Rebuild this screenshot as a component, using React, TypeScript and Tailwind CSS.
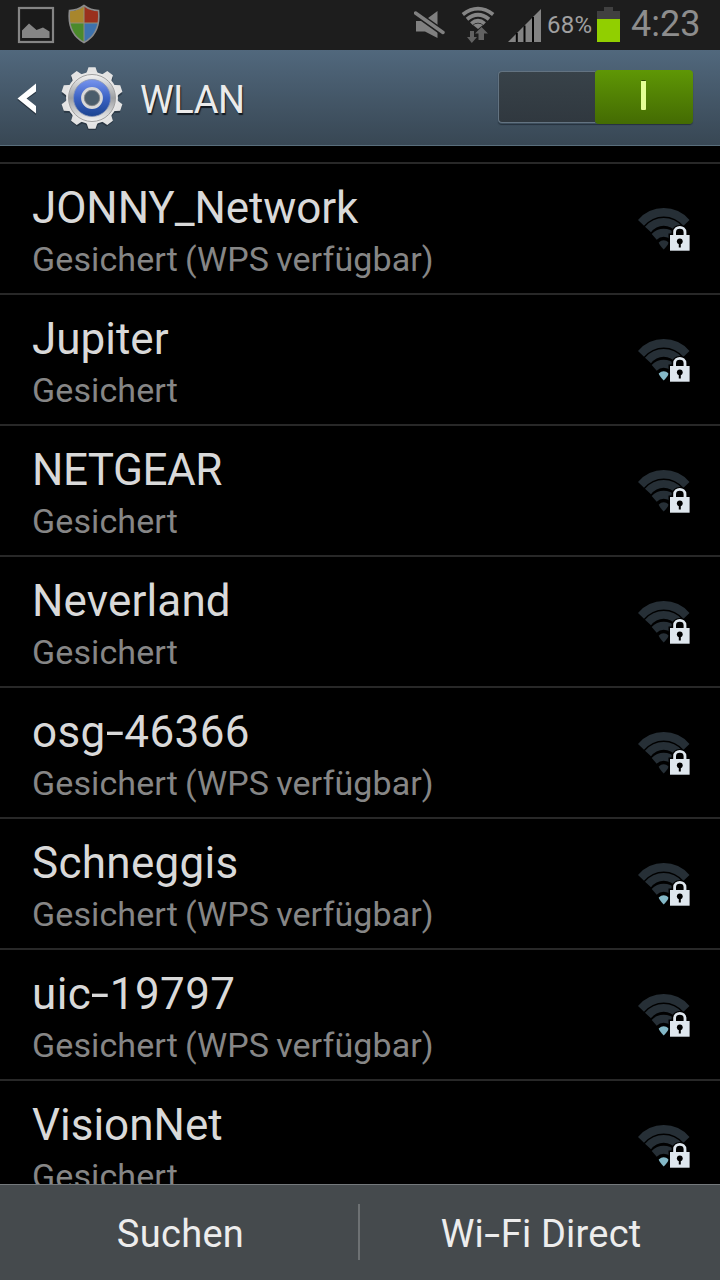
type Network = {
  name: string
  info: string
  signal: boolean
  spacing: string
}

const SECURED = "Gesichert"
const SECURED_WPS = "Gesichert (WPS verfügbar)"

const networks: Network[] = [
  { name: "JONNY_Network", info: SECURED_WPS, signal: false, spacing: "tracking-[-0.1px]" },
  { name: "Jupiter", info: SECURED, signal: true, spacing: "tracking-[0px]" },
  { name: "NETGEAR", info: SECURED, signal: false, spacing: "tracking-[-0.5px]" },
  { name: "Neverland", info: SECURED, signal: false, spacing: "tracking-[0.15px]" },
  { name: "osg-46366", info: SECURED_WPS, signal: false, spacing: "tracking-[0.4px]" },
  { name: "Schneggis", info: SECURED_WPS, signal: true, spacing: "tracking-[0.3px]" },
  { name: "uic-19797", info: SECURED_WPS, signal: true, spacing: "tracking-[0.4px]" },
  { name: "VisionNet", info: SECURED, signal: true, spacing: "tracking-[0px]" },
]

// widens the hyphen, which is short in Roboto
const WideHyphen = ({ text }: { text: string }) => {
  const [before, after] = text.split("-")
  if (after === undefined) return <>{text}</>
  return (
    <>
      {before}
      <span className="mx-[3px] inline-block scale-x-150">-</span>
      {after}
    </>
  )
}

const PictureIcon = () => (
  <svg width="38" height="38" viewBox="0 0 38 38">
    <rect x="2" y="2" width="34" height="34" fill="#1a1a1a" stroke="#858585" strokeWidth="2.200" />
    <path d="M5 32V24.500L12 17.500L19.500 24L26 21.500L32.500 25.500V32Z" fill="#858585" />
  </svg>
)

const ShieldIcon = () => (
  <svg width="34" height="40" viewBox="0 0 34 40">
    <defs>
      <clipPath id="shield">
        <path d="M17 2C13 5 8 7 2.500 7C1 20 5 32 17 38.500C29 32 33 20 31.500 7C26 7 21 5 17 2Z" />
      </clipPath>
    </defs>
    <g clipPath="url(#shield)">
      <rect width="17" height="19" fill="#a8862c" />
      <rect x="17" width="17" height="19" fill="#9a301d" />
      <rect y="19" width="17" height="21" fill="#4b8a2b" />
      <rect x="17" y="19" width="17" height="21" fill="#3d72ad" />
      <path d="M17 0V40M0 19H34" stroke="#929078" strokeWidth="1" />
    </g>
    <path d="M17 1.500C13 4.500 8 6.500 2.500 6.500C1 20 5 32 17 38.500C29 32 33 20 31.500 6.500C26 6.500 21 4.500 17 1.500Z" fill="none" stroke="#8b8b8b" strokeWidth="1.600" />
  </svg>
)

const MuteIcon = () => (
  <svg width="32" height="30" viewBox="0 0 32 30">
    <path d="M2 11H10L23.500 1V28L11 21.500H2Z" fill="#808080" />
    <path d="M0 2L31 24" stroke="#1d1d1d" strokeWidth="6.500" />
    <path d="M1.500 3L29 22.500" stroke="#808080" strokeWidth="3.400" strokeLinecap="round" />
  </svg>
)

const StatusWifiIcon = () => (
  <svg width="34" height="38" viewBox="0 0 34 38">
    <g fill="none" stroke="#858585" strokeWidth="3.800">
      <path d="M1.800 8.500Q17 -3.200 32.200 8.500" />
      <path d="M6 13.300Q17 4.300 28 13.300" />
      <path d="M10.300 17.600Q17 11.800 23.700 17.600" />
    </g>
    <path d="M12 19Q17 15.800 22 19L17 23Z" fill="#858585" />
    <path d="M9 25H13V31H16L10.800 37L6 31H9Z" fill="#626262" />
    <path d="M17.500 34V27.500H14L20.500 21L27 27.500H23V34Z" fill="#626262" />
  </svg>
)

const SignalIcon = () => (
  <svg width="34" height="34" viewBox="0 0 34 34">
    <path d="M0 33L33 0V33Z" fill="#838383" />
    <path d="M8.800 24V33M16.500 16.500V33M25 8V33" stroke="#050505" strokeWidth="2" />
  </svg>
)

const BatteryIcon = () => (
  <svg width="23" height="35" viewBox="0 0 23 35" shapeRendering="crispEdges">
    <path d="M7 0H16V4H23V12H0V4H7Z" fill="#404040" />
    <rect y="12" width="23" height="23" fill="#91cf00" />
  </svg>
)

const teeth = [0, 36, 72, 108, 144, 180, 216, 252, 288, 324]

const SettingsIcon = () => (
  <svg width="66" height="68" viewBox="-33 -33 66 68">
    <defs>
      <linearGradient id="metal" x1="0" y1="0" x2="0" y2="1">
        <stop offset="0" stopColor="#f4f4f4" />
        <stop offset="0.5" stopColor="#9c9fa2" />
        <stop offset="1" stopColor="#f2f2f2" />
      </linearGradient>
      <linearGradient id="blue" x1="0" y1="0" x2="0" y2="1">
        <stop offset="0" stopColor="#7794ee" />
        <stop offset="0.5" stopColor="#3b62c4" />
        <stop offset="1" stopColor="#1b4490" />
      </linearGradient>
    </defs>
    <g fill="#17202a" opacity="0.5" transform="translate(0 1.500)">
      <circle r="26" />
      {teeth.map((angle) => (
        <path key={angle} d="M-6.500 -24L-4 -30.500H4L6.500 -24Z" transform={`rotate(${angle})`} />
      ))}
    </g>
    {teeth.map((angle) => (
      <path key={angle} d="M-6.500 -23L-5 -26.500L-3.500 -30.800H3.500L5 -26.500L6.500 -23Z" fill="#e3e3e3" transform={`rotate(${angle})`} />
    ))}
    <circle r="26" fill="#e6e6e6" />
    <circle r="23.500" fill="url(#metal)" stroke="#a0a0a0" strokeWidth="1" />
    <circle r="18.500" fill="url(#blue)" stroke="#8593b5" strokeWidth="0.800" />
    <circle r="9.400" fill="#4b5d6b" stroke="#d8d8d8" strokeWidth="3" />
    <circle r="7.700" fill="none" stroke="#8b8b8b" strokeWidth="0.800" />
  </svg>
)

const SecuredWifiIcon = ({ signal }: { signal: boolean }) => (
  <svg width="56" height="46" viewBox="0 0 56 46">
    <g fill="#262f36">
      <path d="M2 14A33.500 33.500 0 0 1 53.500 14L47.500 19.800A25.500 25.500 0 0 0 8 19.800Z" />
      <path d="M9 20.700A24.400 24.400 0 0 1 46.400 20.700L40.400 26.300A15.600 15.600 0 0 0 15 26.300Z" />
      <path d="M15.700 28A16.200 16.200 0 0 1 39.700 28L34.700 33.700A9.700 9.700 0 0 0 20.700 33.700Z" />
    </g>
    <path d="M22.700 36.500Q27.700 31.800 32.700 36.500Q32.500 38.500 27.700 43.500Q23 38.500 22.700 36.500Z" fill={signal ? "#84b8c7" : "#262f36"} />
    <path d="M32.500 45.500V27.500H35.500C35.500 16 52 16 52 27.500H55V45.500Z" fill="#000" />
    <path d="M38.600 30V26.200C38.600 19.700 49 19.700 49 26.200V30" fill="none" stroke="#dfe7ee" strokeWidth="2.800" />
    <rect x="34" y="29" width="19.600" height="15.700" fill="#dfe7ee" />
    <circle cx="43.800" cy="35.300" r="2.900" fill="#000" />
    <rect x="42.800" y="36" width="2" height="5.500" fill="#000" />
  </svg>
)

const StatusBar = () => (
  <div className="flex h-[50px] shrink-0 items-start bg-[#1d1d1d]">
    <div className="ml-[17px] mt-[6px]"><PictureIcon /></div>
    <div className="ml-3 mt-[4px]"><ShieldIcon /></div>
    <div className="ml-auto mt-[10px]"><MuteIcon /></div>
    <div className="ml-[15px] mt-[6px]"><StatusWifiIcon /></div>
    <div className="ml-[13px] mt-[9px]"><SignalIcon /></div>
    <p className="ml-[5px] mt-[11px] w-[50px] whitespace-nowrap text-2xl leading-[29px] tracking-[0.2px] text-[#a0a0a0]">68%</p>
    <div className="mt-[7px]"><BatteryIcon /></div>
    <p className="ml-[11px] mt-[4px] w-[89px] whitespace-nowrap text-[36px] leading-[41px] text-[#8d8d8d]">4:23</p>
  </div>
)

const Header = () => (
  <div className="flex h-24 shrink-0 items-start border-b border-[#596e7c] bg-linear-to-b from-[#51687d] to-[#384754]">
    <svg className="ml-[15px] mt-[31px]" width="24" height="36" viewBox="0 0 24 36">
      <path d="M21 4V12L11.500 18.500L21 26V34L2.500 19Z" fill="#17202a" opacity="0.6" />
      <path d="M21 2.500V10.500L11.500 17.500L21 25V32.500L2.500 17.500Z" fill="#fff" />
    </svg>
    <div className="ml-5 mt-[15px]"><SettingsIcon /></div>
    <h1 className="ml-[15px] mt-[28px] text-[38px] leading-[44px] tracking-[-0.4px] text-[#ebebeb] [text-shadow:1px_2px_1px_#111820]">WLAN</h1>
    <div className="ml-auto mr-[27px] mt-[20px] flex h-[54px] w-[195px] items-center rounded shadow-[0_1px_1px_#25313c]">
      <div className="h-[52px] w-[97px] rounded-l border border-r-0 border-[#637381] bg-linear-to-b from-[#384249] to-[#30383f]" />
      <div className="flex h-full flex-1 items-start justify-center rounded bg-linear-to-b from-[#5f9705] to-[#446b03]">
        <div className="mr-px mt-[10px] h-[30px] w-[5px] rounded-[1px] border-t border-[#2e4c00] bg-[#e5ff96]" />
      </div>
    </div>
  </div>
)

const NetworkRow = ({ name, info, signal, spacing }: Network) => (
  <div className="flex h-[131px] shrink-0 items-start justify-between border-t-2 border-[#282828] pl-8 pr-7">
    <div className="pt-[18px]">
      <p className={`whitespace-nowrap text-[44px] leading-[52px] text-[#d9d9d9] ${spacing}`}>
        <WideHyphen text={name} />
      </p>
      <p className="mt-[5px] whitespace-nowrap text-[34px] leading-[40px] tracking-[0.1px] text-[#868686] [word-spacing:-1.5px]">{info}</p>
    </div>
    <div className="mt-[42px]"><SecuredWifiIcon signal={signal} /></div>
  </div>
)

const App = () => {
  return (
    <div className="flex h-[1280px] w-[720px] flex-col overflow-hidden bg-black font-['Roboto',sans-serif]">
      <StatusBar />
      <Header />
      <div className="flex min-h-0 flex-1 flex-col overflow-hidden pt-4">
        {networks.map((network) => (
          <NetworkRow key={network.name} {...network} />
        ))}
      </div>
      <div className="flex h-24 shrink-0 items-start border-t border-[#74797c] bg-[#454a4d] text-[38px] leading-[44px] text-[#ededed]">
        <button className="w-[358px] pl-[3px] pt-[27px] tracking-[0.3px]">Suchen</button>
        <div className="mt-[19px] h-14 w-[2px] bg-[#6d7173]" />
        <button className="flex-1 pl-[2px] pt-[27px] tracking-[0.2px]">
          <WideHyphen text="Wi-Fi Direct" />
        </button>
      </div>
    </div>
  )
}

export default App
